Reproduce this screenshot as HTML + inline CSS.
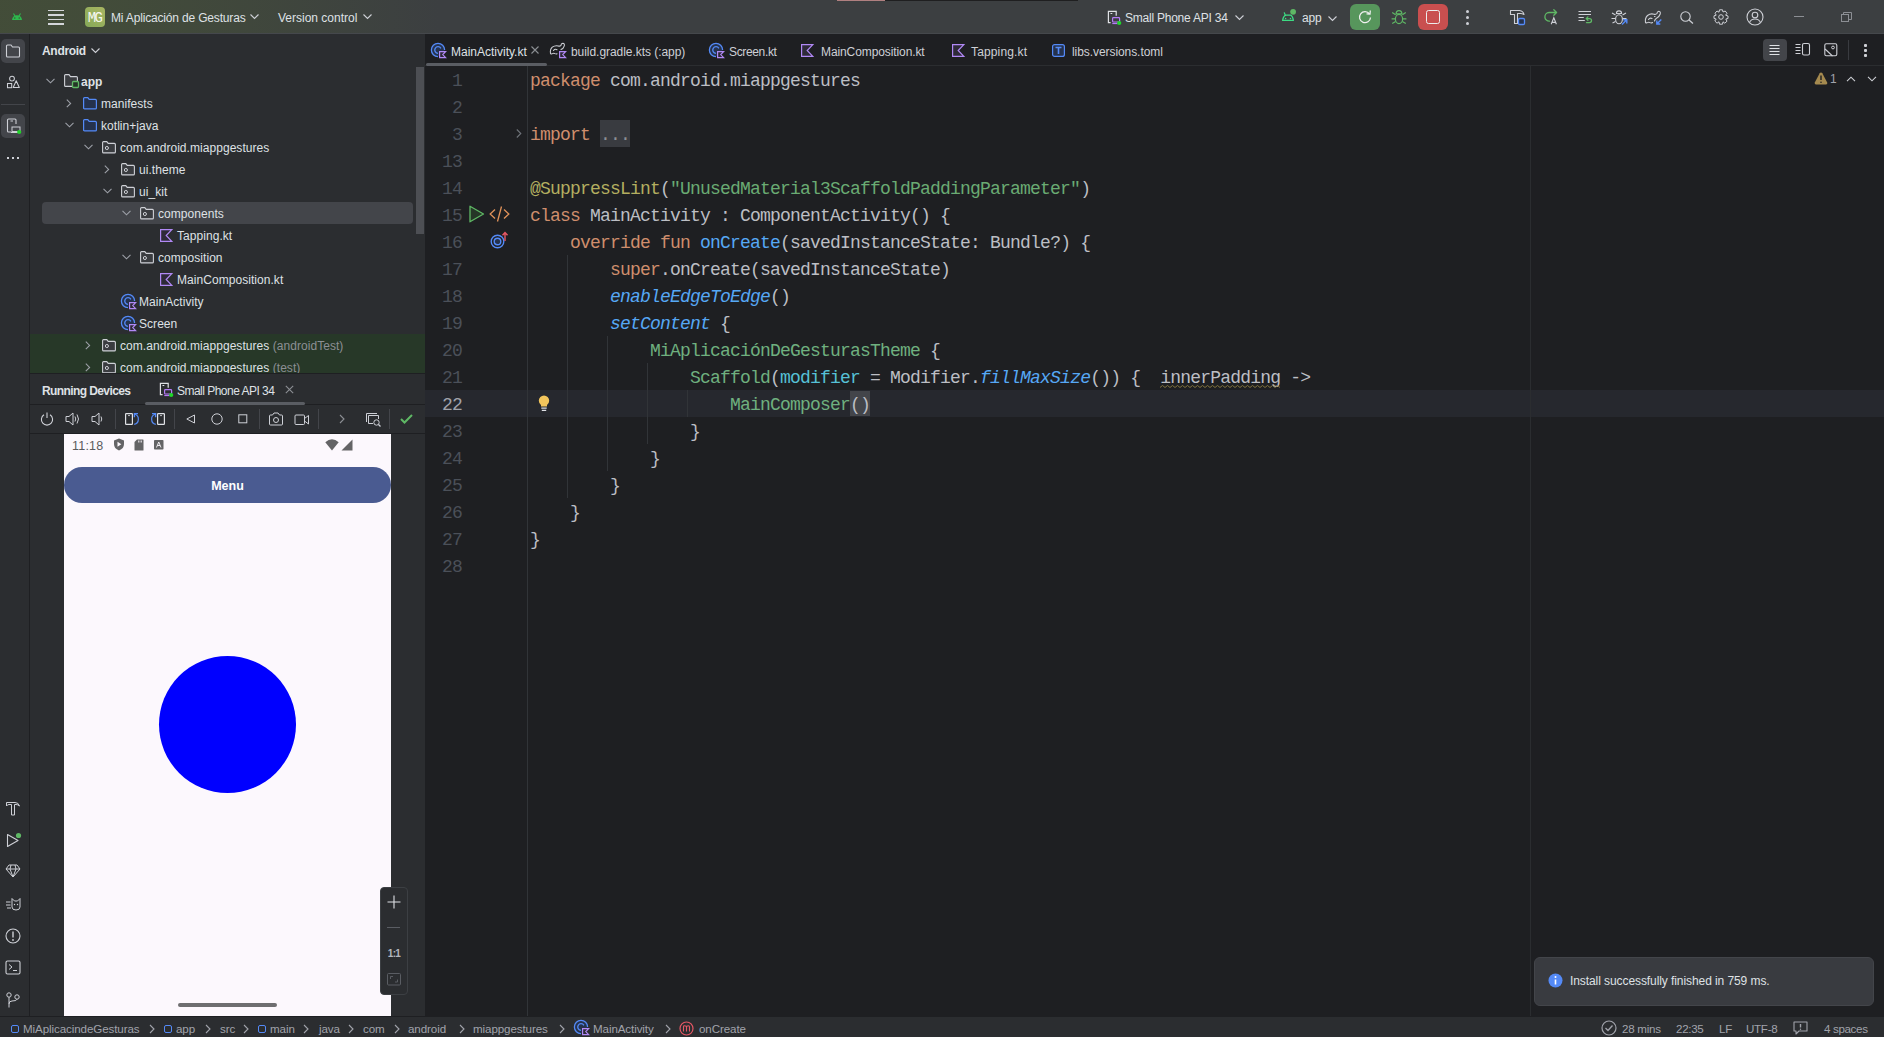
<!DOCTYPE html>
<html><head><meta charset="utf-8">
<style>
*{margin:0;padding:0;box-sizing:border-box}
html,body{width:1884px;height:1037px;overflow:hidden;background:#1E1F22;font-family:"Liberation Sans",sans-serif;color:#DFE1E5}
.a{position:absolute}
svg{position:absolute;overflow:visible}
.t{position:absolute;white-space:pre;font-size:12px;line-height:14px;color:#DFE1E5}
.code{position:absolute;left:530px;font-family:"Liberation Mono",monospace;font-size:18px;letter-spacing:-0.8px;line-height:27px;height:27px;padding-top:2px;white-space:pre;color:#BCBEC4}
.ln{position:absolute;left:402px;width:60px;font-family:"Liberation Mono",monospace;font-size:18px;letter-spacing:-0.8px;line-height:27px;height:27px;padding-top:2px;white-space:pre;color:#4B5059;text-align:right}
.kw{color:#CF8E6D}
.fn{color:#56A8F5}
.it{color:#56A8F5;font-style:italic}
.str{color:#6AAB73}
.ann{color:#B3AE60}
.cmp{color:#6FB07F}
.na{color:#56C1D6}
.ig{position:absolute;width:1px;background:#313438}
</style></head>
<body>
<!-- ================= TITLE BAR ================= -->
<div class="a" style="left:0;top:0;width:1884px;height:34px;background:#3C3F41"></div>
<div class="a" style="left:0;top:0;width:440px;height:33px;background:linear-gradient(90deg,rgba(72,88,50,0.55) 0%,rgba(72,88,50,0.5) 25%,rgba(72,88,50,0.3) 60%,rgba(72,88,50,0) 100%)"></div>
<div class="a" style="left:837px;top:0;width:241px;height:1px;background:#1F1F20"></div>
<div class="a" style="left:837px;top:0;width:48px;height:1px;background:#B08080"></div>
<div class="a" style="left:0;top:33px;width:1884px;height:1px;background:#45484C"></div>
<!-- android head -->
<svg style="left:11px;top:13px" width="12" height="8" viewBox="0 0 12 8"><path d="M1 7 Q1.5 2.5 6 2.3 Q10.5 2.5 11 7 Z" fill="#2DB84D"/><path d="M2.5 0.5 L4 3 M9.5 0.5 L8 3" stroke="#2DB84D" stroke-width="1.1"/><rect x="3.3" y="4.3" width="1" height="1.5" fill="#3F4A38"/><rect x="7.7" y="4.3" width="1" height="1.5" fill="#3F4A38"/></svg>
<!-- hamburger -->
<div class="a" style="left:48px;top:9.5px;width:16px;height:1.5px;background:#D4D6DA"></div>
<div class="a" style="left:48px;top:14px;width:16px;height:1.5px;background:#D4D6DA"></div>
<div class="a" style="left:48px;top:18.5px;width:16px;height:1.5px;background:#D4D6DA"></div>
<div class="a" style="left:48px;top:23px;width:16px;height:1.5px;background:#D4D6DA"></div>
<!-- MG badge -->
<div class="a" style="left:85px;top:7px;width:20px;height:20px;border-radius:4px;background:linear-gradient(45deg,#86AA58,#A9B562)"></div>
<div class="a" style="left:85px;top:8px;width:20px;height:20px;line-height:20px;text-align:center;font-family:'Liberation Mono',monospace;font-size:14px;letter-spacing:-1.6px;text-indent:-1px;color:#F6F8F0;white-space:pre">MG</div>
<div class="t" style="left:111px;top:11px;font-size:12px;letter-spacing:-0.17px">Mi Aplicación de Gesturas</div>
<svg style="left:250px;top:14px" width="9" height="6" viewBox="0 0 9 6"><path d="M0.5 0.5 L4.5 4.5 L8.5 0.5" fill="none" stroke="#CED0D6" stroke-width="1.1"/></svg>
<div class="t" style="left:278px;top:11px;font-size:12px;letter-spacing:0px">Version control</div>
<svg style="left:363px;top:14px" width="9" height="6" viewBox="0 0 9 6"><path d="M0.5 0.5 L4.5 4.5 L8.5 0.5" fill="none" stroke="#CED0D6" stroke-width="1.1"/></svg>
<!-- title right -->
<svg style="left:1107px;top:10px" width="16" height="16" viewBox="0 0 16 16"><path d="M3.6 12.6 H1.4 V1.4 H9.2 V5.8" fill="none" stroke="#DFE1E5" stroke-width="1.2"/><path d="M3.5 3.5 H5.3" stroke="#DFE1E5" stroke-width="1"/><rect x="5.6" y="7.6" width="7" height="4.4" rx="0.8" fill="none" stroke="#B57BF7" stroke-width="1.2"/><path d="M5.3 13.5 H10.5" stroke="#B57BF7" stroke-width="1.2"/><circle cx="12.2" cy="13" r="2.1" fill="#1FD82B"/></svg>
<div class="t" style="left:1125px;top:11px;letter-spacing:-0.23px">Small Phone API 34</div>
<svg style="left:1235px;top:15px" width="9" height="6" viewBox="0 0 9 6"><path d="M0.5 0.5 L4.5 4.5 L8.5 0.5" fill="none" stroke="#CED0D6" stroke-width="1.1"/></svg>
<svg style="left:1280px;top:8px" width="17" height="15" viewBox="0 0 17 15"><path d="M2.6 12.4 Q3.4 8 5.8 7.2 H10.6 Q12.6 8 13.4 12.4 Z" fill="none" stroke="#3DDC84" stroke-width="1.3" stroke-linejoin="round"/><path d="M4.3 4.8 L5.3 7.3" stroke="#3DDC84" stroke-width="1.2" stroke-linecap="round"/><circle cx="5.6" cy="10.5" r="0.75" fill="#3DDC84"/><circle cx="10.5" cy="10.5" r="0.75" fill="#3DDC84"/><circle cx="13.1" cy="3.8" r="2.9" fill="#5FB865"/></svg>
<div class="t" style="left:1302px;top:11px;letter-spacing:-0.2px">app</div>
<svg style="left:1328px;top:16px" width="9" height="6" viewBox="0 0 9 6"><path d="M0.5 0.5 L4.5 4.5 L8.5 0.5" fill="none" stroke="#CED0D6" stroke-width="1.1"/></svg>
<div class="a" style="left:1350px;top:4px;width:30px;height:26px;border-radius:6px;background:#57965C"></div>
<svg style="left:1357px;top:9px" width="16" height="16" viewBox="0 0 16 16"><path d="M12.5 5 A5.5 5.5 0 1 0 13.5 8.5" fill="none" stroke="#F0F0F0" stroke-width="1.3"/><path d="M9.5 4.8 L13 5 L13.3 1.5" fill="none" stroke="#F0F0F0" stroke-width="1.3"/></svg>
<svg style="left:1391px;top:9px" width="16" height="16" viewBox="0 0 16 16"><ellipse cx="8" cy="10" rx="3.6" ry="4.6" fill="none" stroke="#5FB865" stroke-width="1.2"/><path d="M5.1 4.9 A2.9 3.3 0 0 1 10.9 4.9 Z" fill="none" stroke="#5FB865" stroke-width="1.2"/><path d="M1.2 3.6 L4.6 5.8 M14.8 3.6 L11.4 5.8 M0.6 9.8 H4.4 M15.4 9.8 H11.6 M1.2 14.6 L4.6 12.6 M14.8 14.6 L11.4 12.6" stroke="#5FB865" stroke-width="1.2"/></svg>
<div class="a" style="left:1418px;top:4px;width:30px;height:26px;border-radius:6px;background:#C94F4F"></div>
<div class="a" style="left:1426px;top:10px;width:14px;height:14px;border:1.6px solid #EDEDED;border-radius:2.5px"></div>
<div class="a" style="left:1466px;top:10px;width:3px;height:3px;border-radius:2px;background:#CED0D6"></div>
<div class="a" style="left:1466px;top:16px;width:3px;height:3px;border-radius:2px;background:#CED0D6"></div>
<div class="a" style="left:1466px;top:22px;width:3px;height:3px;border-radius:2px;background:#CED0D6"></div>
<!-- hammer -->
<svg style="left:1509px;top:9px" width="17" height="17" viewBox="0 0 17 17"><path d="M1.5 1.5 H10.5 Q14.3 2 15 5.5 Q13.2 4.6 11.5 4.5 H8.5 V14.5 H5.5 V5.5 H1.5 Z" fill="none" stroke="#CED0D6" stroke-width="1.1" stroke-linejoin="round"/><rect x="9.5" y="9.5" width="6" height="6" rx="1.2" fill="#25324D" stroke="#548AF7" stroke-width="1.3"/></svg>
<!-- apply changes -->
<svg style="left:1543px;top:9px" width="17" height="17" viewBox="0 0 17 17"><path d="M6.5 12.2 A4.35 4.35 0 0 1 6 3.5 H13.6 M10.8 0.8 L13.6 3.5 L10.8 6.2" fill="none" stroke="#5FB865" stroke-width="1.3" stroke-linecap="round" stroke-linejoin="round"/><path d="M8.2 15.2 L10.8 8.8 L13.4 15.2 M9 13.4 H12.6" fill="none" stroke="#CED0D6" stroke-width="1.1"/></svg>
<!-- list -->
<svg style="left:1577px;top:10px" width="17" height="16" viewBox="0 0 17 16"><path d="M1.5 1.5 H14 M1.5 4.5 H14 M1.5 7.5 H6.8 M1.5 10.5 H7.8" stroke="#CED0D6" stroke-width="1.1"/><path d="M9.2 8.6 H12.5 A2 2 0 0 1 12.5 12.6 H9.5 M10.9 6.9 L9.2 8.6 L10.9 10.3" fill="none" stroke="#5FB865" stroke-width="1.3" stroke-linecap="round" stroke-linejoin="round"/></svg>
<!-- bug blue arrow -->
<svg style="left:1610px;top:9px" width="19" height="17" viewBox="0 0 19 17"><ellipse cx="9" cy="10.2" rx="3.4" ry="4.5" fill="none" stroke="#CED0D6" stroke-width="1.1"/><path d="M6.4 4.5 A2.6 2.6 0 0 1 11.6 4.5 Z" fill="none" stroke="#CED0D6" stroke-width="1.1"/><path d="M2 4 L5.5 6 M1.5 9.5 H5.5 M2.5 14 L5.5 12.5 M16 4 L12.5 6 M16.5 9.5 H12.5" stroke="#CED0D6" stroke-width="1.1"/><path d="M12 15.5 L16.8 10.8 M13.2 10.8 H16.8 V14.4" fill="none" stroke="#548AF7" stroke-width="1.4"/></svg>
<!-- attach -->
<svg style="left:1644px;top:9px" width="19" height="17" viewBox="0 0 19 17"><path d="M1.5 13.5 Q0.8 9 3.5 6.5 Q6.5 4.2 10 5.2 Q11.8 5.8 13 4.5 Q13 2.5 14.8 2.2 Q16.8 2.5 16.2 5 Q15.2 8 12.5 9.2 Q11 10 10.5 12 M1.5 13.5 Q2.5 14.3 3.5 13.6 Q4.8 12.8 6 13.6 Q7.2 14.4 8.5 13.5 M4.5 10.5 Q6 8.3 8 9.5 M10.5 7.5 H11" fill="none" stroke="#CED0D6" stroke-width="1.1" stroke-linecap="round"/><path d="M17.3 10.5 L12.8 15 M12.8 11.5 V15 H16.3" fill="none" stroke="#548AF7" stroke-width="1.4"/></svg>
<!-- search -->
<svg style="left:1680px;top:11px" width="14" height="13" viewBox="0 0 14 13"><circle cx="5.5" cy="5.5" r="4.7" fill="none" stroke="#CED0D6" stroke-width="1.1"/><line x1="9" y1="9" x2="13" y2="12.5" stroke="#CED0D6" stroke-width="1.2"/></svg>
<!-- gear -->
<svg style="left:1713px;top:9px" width="16" height="16" viewBox="0 0 16 16"><path d="M6.5 0.8 H9.5 L10 3 L12.2 2 L14 4.3 L12.6 6.2 L15 7 V9.5 L12.8 10 L14 12.2 L11.8 14.2 L10 12.8 L9.5 15.2 H6.5 L6 12.8 L4 14.2 L1.8 12 L3.2 10 L1 9.5 V6.8 L3.2 6.2 L2 4.2 L4 2 L6 3.2 Z" fill="none" stroke="#CED0D6" stroke-width="1" stroke-linejoin="round"/><circle cx="8" cy="8" r="2.3" fill="none" stroke="#CED0D6"/></svg>
<!-- user -->
<svg style="left:1746px;top:8px" width="18" height="18" viewBox="0 0 18 18"><circle cx="9" cy="9" r="8" fill="none" stroke="#CED0D6" stroke-width="1.1"/><circle cx="9" cy="7" r="2.8" fill="none" stroke="#CED0D6" stroke-width="1.1"/><path d="M3.5 14.5 Q5 11 9 11 Q13 11 14.5 14.5" fill="none" stroke="#CED0D6" stroke-width="1.1"/></svg>
<div class="a" style="left:1794px;top:16px;width:10px;height:1px;background:#8C8F94"></div>
<svg style="left:1841px;top:12px" width="11" height="10" viewBox="0 0 11 10"><rect x="0.5" y="2.5" width="7" height="7" fill="none" stroke="#8C8F94"/><path d="M2.5 2.5 V0.5 H10.5 V7.5 H7.5" fill="none" stroke="#8C8F94"/></svg>
<!-- ================= LEFT STRIP ================= -->
<div class="a" style="left:0;top:34px;width:29px;height:982px;background:#2B2D30"></div>
<div class="a" style="left:29px;top:34px;width:1px;height:982px;background:#1E1F22"></div>
<div class="a" style="left:1px;top:39px;width:24px;height:24px;border-radius:5px;background:#43454A"></div>
<svg style="left:5px;top:44px" width="16" height="14" viewBox="0 0 16 14"><path d="M1.5 2 Q1.5 1 2.5 1 H6 L7.5 3 H13.5 Q14.5 3 14.5 4 V12 Q14.5 13 13.5 13 H2.5 Q1.5 13 1.5 12 Z" fill="none" stroke="#CED0D6" stroke-width="1.1"/></svg>
<svg style="left:6px;top:75px" width="15" height="14" viewBox="0 0 15 14"><circle cx="6" cy="3.6" r="2.4" fill="none" stroke="#CED0D6" stroke-width="1.05"/><rect x="1.5" y="8.5" width="4.2" height="4.2" fill="none" stroke="#CED0D6" stroke-width="1.05"/><path d="M10.2 5.8 L13.3 12.5 H7.2 Z" fill="none" stroke="#CED0D6" stroke-width="1.05" stroke-linejoin="round"/></svg>
<div class="a" style="left:1px;top:104px;width:24px;height:1px;background:#43454A"></div>
<div class="a" style="left:1px;top:114px;width:24px;height:24px;border-radius:5px;background:#43454A"></div>
<svg style="left:6px;top:118px" width="16" height="16" viewBox="0 0 16 16"><path d="M10 6 V2 Q10 1 9 1 H2.5 Q1.5 1 1.5 2 V13 Q1.5 14 2.5 14 H5" fill="none" stroke="#CED0D6" stroke-width="1.1"/><line x1="4.5" y1="3" x2="7" y2="3" stroke="#CED0D6"/><rect x="6" y="9" width="8" height="4.5" fill="none" stroke="#CED0D6"/><line x1="5" y1="14.5" x2="12" y2="14.5" stroke="#CED0D6"/><circle cx="13.2" cy="14" r="2.1" fill="#22D32B"/></svg>
<div class="a" style="left:7px;top:157px;width:2px;height:2px;background:#CED0D6"></div>
<div class="a" style="left:12px;top:157px;width:2px;height:2px;background:#CED0D6"></div>
<div class="a" style="left:17px;top:157px;width:2px;height:2px;background:#CED0D6"></div>
<!-- bottom strip icons -->
<svg style="left:6px;top:801px" width="15" height="15" viewBox="0 0 15 15"><path d="M0.5 1.5 H9 Q12.5 1.5 13.5 5 Q12 3.5 10 3.5 H8.5 V14 H5.5 V3.5 H3 Q1.5 3.5 0.5 5 Z" fill="none" stroke="#CED0D6" stroke-linejoin="round"/></svg>
<svg style="left:6px;top:832px" width="16" height="16" viewBox="0 0 16 16"><path d="M1.5 2.5 L12 8.5 L1.5 14.5 Z" fill="none" stroke="#CED0D6" stroke-width="1.1" stroke-linejoin="round"/><circle cx="12.5" cy="3.5" r="2.6" fill="#5FB865"/></svg>
<svg style="left:5px;top:864px" width="16" height="14" viewBox="0 0 16 14"><path d="M4 1 H12 L15 5 L8 13 L1 5 Z M1 5 H15 M6 1 L5 5 L8 13 L11 5 L10 1" fill="none" stroke="#CED0D6" stroke-linejoin="round"/></svg>
<svg style="left:5px;top:897px" width="16" height="14" viewBox="0 0 16 14"><path d="M7 1.5 L9.5 4 H12.5 L15 1.5 V10 Q15 13 11 13 Q7 13 7 10 Z" fill="none" stroke="#CED0D6" stroke-linejoin="round"/><path d="M1 5 H5.5 M1 8 H5.5 M2 11 H6" stroke="#CED0D6"/><circle cx="9.5" cy="7.5" r="0.7" fill="#CED0D6"/><circle cx="12.5" cy="7.5" r="0.7" fill="#CED0D6"/></svg>
<svg style="left:5px;top:928px" width="16" height="16" viewBox="0 0 16 16"><circle cx="8" cy="8" r="7" fill="none" stroke="#CED0D6" stroke-width="1.1"/><line x1="8" y1="3.5" x2="8" y2="9.5" stroke="#CED0D6" stroke-width="1.4"/><circle cx="8" cy="12" r="0.9" fill="#CED0D6"/></svg>
<svg style="left:5px;top:960px" width="16" height="15" viewBox="0 0 16 15"><rect x="1" y="1" width="14" height="13" rx="1.5" fill="none" stroke="#CED0D6" stroke-width="1.1"/><path d="M4 4.5 L7 7 L4 9.5 M8 10.5 H12" fill="none" stroke="#CED0D6"/></svg>
<svg style="left:6px;top:992px" width="14" height="16" viewBox="0 0 14 16"><circle cx="3" cy="3" r="2.2" fill="none" stroke="#CED0D6"/><circle cx="11" cy="5" r="2.2" fill="none" stroke="#CED0D6"/><path d="M3 5.2 V15.5 M3 12 Q3 9 6 9 Q11 9 11 7.2" fill="none" stroke="#CED0D6"/></svg>
<!-- ================= PROJECT PANEL ================= -->
<div class="a" style="left:30px;top:34px;width:395px;height:339px;background:#2B2D30"></div>
<div class="t" style="left:42px;top:44px;font-weight:bold;letter-spacing:-0.3px">Android</div>
<svg style="left:91px;top:48px" width="9" height="6" viewBox="0 0 9 6"><path d="M0.5 0.5 L4.5 4.5 L8.5 0.5" fill="none" stroke="#CED0D6" stroke-width="1.1"/></svg>
<div class="a" style="left:416px;top:67px;width:8px;height:167px;background:#4D4F54"></div>
<div class="a" style="left:30px;top:334px;width:395px;height:39px;background:#273828"></div>
<div class="a" style="left:42px;top:202px;width:371px;height:22px;border-radius:4px;background:#43454A"></div>
<svg style="left:46px;top:78px" width="9" height="6" viewBox="0 0 9 6"><path d="M0.5 0.8 L4.5 4.8 L8.5 0.8" fill="none" stroke="#9DA0A8" stroke-width="1.1"/></svg>
<svg style="left:64px;top:74px" width="17" height="15" viewBox="0 0 17 15"><path d="M0.6 1.6 Q0.6 0.6 1.6 0.6 H5 L6.5 2.6 H12.4 Q13.4 2.6 13.4 3.6 V11.4 Q13.4 12.4 12.4 12.4 H1.6 Q0.6 12.4 0.6 11.4 Z" fill="#3A3C40" stroke="#CED0D6" stroke-width="1.1"/><rect x="8.5" y="7.5" width="6" height="6" rx="1" fill="#253627" stroke="#5FB865" stroke-width="1.3"/></svg>
<div class="t" style="left:81px;top:75px;font-weight:bold;letter-spacing:0.05px">app</div>
<svg style="left:66px;top:99px" width="6" height="9" viewBox="0 0 6 9"><path d="M0.8 0.6 L4.6 4.4 L0.8 8.2" fill="none" stroke="#9DA0A8" stroke-width="1.1"/></svg>
<svg style="left:83px;top:97px" width="15" height="13" viewBox="0 0 15 13"><path d="M0.6 1.6 Q0.6 0.6 1.6 0.6 H4.8 L6.2 2.4 H12.4 Q13.4 2.4 13.4 3.4 V10.9 Q13.4 11.9 12.4 11.9 H1.6 Q0.6 11.9 0.6 10.9 Z" fill="#25324D" stroke="#548AF7" stroke-width="1.2"/></svg>
<div class="t" style="left:101px;top:97px;letter-spacing:0.05px">manifests</div>
<svg style="left:65px;top:122px" width="9" height="6" viewBox="0 0 9 6"><path d="M0.5 0.8 L4.5 4.8 L8.5 0.8" fill="none" stroke="#9DA0A8" stroke-width="1.1"/></svg>
<svg style="left:83px;top:119px" width="15" height="13" viewBox="0 0 15 13"><path d="M0.6 1.6 Q0.6 0.6 1.6 0.6 H4.8 L6.2 2.4 H12.4 Q13.4 2.4 13.4 3.4 V10.9 Q13.4 11.9 12.4 11.9 H1.6 Q0.6 11.9 0.6 10.9 Z" fill="#25324D" stroke="#548AF7" stroke-width="1.2"/></svg>
<div class="t" style="left:101px;top:119px;letter-spacing:0.05px">kotlin+java</div>
<svg style="left:84px;top:144px" width="9" height="6" viewBox="0 0 9 6"><path d="M0.5 0.8 L4.5 4.8 L8.5 0.8" fill="none" stroke="#9DA0A8" stroke-width="1.1"/></svg>
<svg style="left:102px;top:141px" width="15" height="13" viewBox="0 0 15 13"><path d="M0.6 1.6 Q0.6 0.6 1.6 0.6 H4.8 L6.2 2.4 H12.4 Q13.4 2.4 13.4 3.4 V10.9 Q13.4 11.9 12.4 11.9 H1.6 Q0.6 11.9 0.6 10.9 Z" fill="#3A3C40" stroke="#CED0D6" stroke-width="1.1"/><circle cx="4.9" cy="7" r="1.55" fill="none" stroke="#CED0D6" stroke-width="1"/></svg>
<div class="t" style="left:120px;top:141px;letter-spacing:0.05px">com.android.miappgestures</div>
<svg style="left:104px;top:165px" width="6" height="9" viewBox="0 0 6 9"><path d="M0.8 0.6 L4.6 4.4 L0.8 8.2" fill="none" stroke="#9DA0A8" stroke-width="1.1"/></svg>
<svg style="left:121px;top:163px" width="15" height="13" viewBox="0 0 15 13"><path d="M0.6 1.6 Q0.6 0.6 1.6 0.6 H4.8 L6.2 2.4 H12.4 Q13.4 2.4 13.4 3.4 V10.9 Q13.4 11.9 12.4 11.9 H1.6 Q0.6 11.9 0.6 10.9 Z" fill="#3A3C40" stroke="#CED0D6" stroke-width="1.1"/><circle cx="4.9" cy="7" r="1.55" fill="none" stroke="#CED0D6" stroke-width="1"/></svg>
<div class="t" style="left:139px;top:163px;letter-spacing:0.05px">ui.theme</div>
<svg style="left:103px;top:188px" width="9" height="6" viewBox="0 0 9 6"><path d="M0.5 0.8 L4.5 4.8 L8.5 0.8" fill="none" stroke="#9DA0A8" stroke-width="1.1"/></svg>
<svg style="left:121px;top:185px" width="15" height="13" viewBox="0 0 15 13"><path d="M0.6 1.6 Q0.6 0.6 1.6 0.6 H4.8 L6.2 2.4 H12.4 Q13.4 2.4 13.4 3.4 V10.9 Q13.4 11.9 12.4 11.9 H1.6 Q0.6 11.9 0.6 10.9 Z" fill="#3A3C40" stroke="#CED0D6" stroke-width="1.1"/><circle cx="4.9" cy="7" r="1.55" fill="none" stroke="#CED0D6" stroke-width="1"/></svg>
<div class="t" style="left:139px;top:185px;letter-spacing:0.05px">ui_kit</div>
<svg style="left:122px;top:210px" width="9" height="6" viewBox="0 0 9 6"><path d="M0.5 0.8 L4.5 4.8 L8.5 0.8" fill="none" stroke="#9DA0A8" stroke-width="1.1"/></svg>
<svg style="left:140px;top:207px" width="15" height="13" viewBox="0 0 15 13"><path d="M0.6 1.6 Q0.6 0.6 1.6 0.6 H4.8 L6.2 2.4 H12.4 Q13.4 2.4 13.4 3.4 V10.9 Q13.4 11.9 12.4 11.9 H1.6 Q0.6 11.9 0.6 10.9 Z" fill="#3A3C40" stroke="#CED0D6" stroke-width="1.1"/><circle cx="4.9" cy="7" r="1.55" fill="none" stroke="#CED0D6" stroke-width="1"/></svg>
<div class="t" style="left:158px;top:207px;letter-spacing:0.05px">components</div>
<svg style="left:160px;top:229px" width="13" height="13" viewBox="0 0 13 13"><path d="M0.6 0.6 H11.8 L6.2 6.5 L11.8 12.4 H0.6 Z" fill="#2E2A38" stroke="#B189F5" stroke-width="1.2" stroke-linejoin="miter"/></svg>
<div class="t" style="left:177px;top:229px;letter-spacing:0.05px">Tapping.kt</div>
<svg style="left:122px;top:254px" width="9" height="6" viewBox="0 0 9 6"><path d="M0.5 0.8 L4.5 4.8 L8.5 0.8" fill="none" stroke="#9DA0A8" stroke-width="1.1"/></svg>
<svg style="left:140px;top:251px" width="15" height="13" viewBox="0 0 15 13"><path d="M0.6 1.6 Q0.6 0.6 1.6 0.6 H4.8 L6.2 2.4 H12.4 Q13.4 2.4 13.4 3.4 V10.9 Q13.4 11.9 12.4 11.9 H1.6 Q0.6 11.9 0.6 10.9 Z" fill="#3A3C40" stroke="#CED0D6" stroke-width="1.1"/><circle cx="4.9" cy="7" r="1.55" fill="none" stroke="#CED0D6" stroke-width="1"/></svg>
<div class="t" style="left:158px;top:251px;letter-spacing:0.05px">composition</div>
<svg style="left:160px;top:273px" width="13" height="13" viewBox="0 0 13 13"><path d="M0.6 0.6 H11.8 L6.2 6.5 L11.8 12.4 H0.6 Z" fill="#2E2A38" stroke="#B189F5" stroke-width="1.2" stroke-linejoin="miter"/></svg>
<div class="t" style="left:177px;top:273px;letter-spacing:0.05px">MainComposition.kt</div>
<svg style="left:120px;top:293px" width="17" height="17" viewBox="0 0 17 17"><circle cx="8" cy="8" r="6.6" fill="#25324D"/><path d="M14.6 8 A6.6 6.6 0 1 0 8 14.6" fill="none" stroke="#548AF7" stroke-width="1.3"/><path d="M10.9 6.35 A3.3 3.3 0 1 0 8 11.3" fill="none" stroke="#548AF7" stroke-width="1.3"/><path d="M9.6 9.6 H15.6 L12.8 12.6 L15.6 15.6 H9.6 Z" fill="#2E2A38" stroke="#B189F5" stroke-width="1.2"/></svg>
<div class="t" style="left:139px;top:295px;letter-spacing:0.05px">MainActivity</div>
<svg style="left:120px;top:315px" width="17" height="17" viewBox="0 0 17 17"><circle cx="8" cy="8" r="6.6" fill="#25324D"/><path d="M14.6 8 A6.6 6.6 0 1 0 8 14.6" fill="none" stroke="#548AF7" stroke-width="1.3"/><path d="M10.9 6.35 A3.3 3.3 0 1 0 8 11.3" fill="none" stroke="#548AF7" stroke-width="1.3"/><path d="M9.6 9.6 H15.6 L12.8 12.6 L15.6 15.6 H9.6 Z" fill="#2E2A38" stroke="#B189F5" stroke-width="1.2"/></svg>
<div class="t" style="left:139px;top:317px;letter-spacing:0.05px">Screen</div>
<svg style="left:85px;top:341px" width="6" height="9" viewBox="0 0 6 9"><path d="M0.8 0.6 L4.6 4.4 L0.8 8.2" fill="none" stroke="#9DA0A8" stroke-width="1.1"/></svg>
<svg style="left:102px;top:339px" width="15" height="13" viewBox="0 0 15 13"><path d="M0.6 1.6 Q0.6 0.6 1.6 0.6 H4.8 L6.2 2.4 H12.4 Q13.4 2.4 13.4 3.4 V10.9 Q13.4 11.9 12.4 11.9 H1.6 Q0.6 11.9 0.6 10.9 Z" fill="#3A3C40" stroke="#CED0D6" stroke-width="1.1"/><circle cx="4.9" cy="7" r="1.55" fill="none" stroke="#CED0D6" stroke-width="1"/></svg>
<div class="t" style="left:120px;top:339px;letter-spacing:0.05px">com.android.miappgestures<span style="color:#8C8F94"> (androidTest)</span></div>
<svg style="left:85px;top:363px" width="6" height="9" viewBox="0 0 6 9"><path d="M0.8 0.6 L4.6 4.4 L0.8 8.2" fill="none" stroke="#9DA0A8" stroke-width="1.1"/></svg>
<svg style="left:102px;top:361px" width="15" height="13" viewBox="0 0 15 13"><path d="M0.6 1.6 Q0.6 0.6 1.6 0.6 H4.8 L6.2 2.4 H12.4 Q13.4 2.4 13.4 3.4 V10.9 Q13.4 11.9 12.4 11.9 H1.6 Q0.6 11.9 0.6 10.9 Z" fill="#3A3C40" stroke="#CED0D6" stroke-width="1.1"/><circle cx="4.9" cy="7" r="1.55" fill="none" stroke="#CED0D6" stroke-width="1"/></svg>
<div class="t" style="left:120px;top:361px;letter-spacing:0.05px">com.android.miappgestures<span style="color:#8C8F94"> (test)</span></div>
<!-- ================= RUNNING DEVICES ================= -->
<div class="a" style="left:30px;top:373px;width:395px;height:1px;background:#1E1F22"></div>
<div class="a" style="left:30px;top:374px;width:395px;height:642px;background:#2B2D30"></div>
<div class="t" style="left:42px;top:384px;font-weight:bold;letter-spacing:-0.6px">Running Devices</div>
<svg style="left:159px;top:382px" width="16" height="16" viewBox="0 0 16 16"><path d="M3.6 12.6 H1.4 V1.4 H9.2 V5.8" fill="none" stroke="#DFE1E5" stroke-width="1.2"/><path d="M3.5 3.5 H5.3" stroke="#DFE1E5" stroke-width="1"/><rect x="5.6" y="7.6" width="7" height="4.4" rx="0.8" fill="none" stroke="#B57BF7" stroke-width="1.2"/><path d="M5.3 13.5 H10.5" stroke="#B57BF7" stroke-width="1.2"/><circle cx="12.2" cy="13" r="2.1" fill="#1FD82B"/></svg>
<div class="t" style="left:177px;top:384px;letter-spacing:-0.52px">Small Phone API 34</div>
<svg style="left:285px;top:385px" width="9" height="9" viewBox="0 0 9 9"><path d="M0.8 0.8 L8.2 8.2 M8.2 0.8 L0.8 8.2" stroke="#8C8F94" stroke-width="1.1"/></svg>
<div class="a" style="left:30px;top:404px;width:395px;height:1px;background:#1E1F22"></div>
<div class="a" style="left:145px;top:402px;width:160px;height:3px;border-radius:2px;background:#5A5D63"></div>
<!-- toolbar -->
<svg style="left:40px;top:412px" width="14" height="14" viewBox="0 0 14 14"><path d="M4 2.8 A5.6 5.6 0 1 0 10 2.8" fill="none" stroke="#CED0D6" stroke-width="1.1"/><line x1="7" y1="0.5" x2="7" y2="6" stroke="#CED0D6" stroke-width="1.1"/></svg>
<svg style="left:65px;top:412px" width="15" height="14" viewBox="0 0 15 14"><path d="M1 4.5 H4 L8 1 V13 L4 9.5 H1 Z" fill="none" stroke="#CED0D6" stroke-linejoin="round"/><path d="M10 4.5 Q11.5 7 10 9.5 M12 2.5 Q15 7 12 11.5" fill="none" stroke="#CED0D6"/></svg>
<svg style="left:91px;top:412px" width="12" height="14" viewBox="0 0 12 14"><path d="M1 4.5 H4 L8 1 V13 L4 9.5 H1 Z" fill="none" stroke="#CED0D6" stroke-linejoin="round"/><path d="M10 4.5 Q11.5 7 10 9.5" fill="none" stroke="#CED0D6"/></svg>
<div class="a" style="left:115px;top:409px;width:1px;height:20px;background:#43454A"></div>
<svg style="left:124px;top:412px" width="17" height="14" viewBox="0 0 17 14"><rect x="1.6" y="1.6" width="6.8" height="10.8" rx="0.6" fill="none" stroke="#DFE1E5" stroke-width="1.2"/><path d="M4.2 3.6 H5.8" stroke="#DFE1E5" stroke-width="1"/><path d="M10.2 12.4 A5.4 5.4 0 0 0 10.6 2" fill="none" stroke="#548AF7" stroke-width="1.2"/><path d="M10.4 5.2 V1.6 H14" fill="none" stroke="#548AF7" stroke-width="1.4"/></svg>
<svg style="left:150px;top:412px" width="17" height="14" viewBox="0 0 17 14"><rect x="7.6" y="1.6" width="6.8" height="10.8" rx="0.6" fill="none" stroke="#DFE1E5" stroke-width="1.2"/><path d="M10.2 3.6 H11.8" stroke="#DFE1E5" stroke-width="1"/><path d="M5.8 12.4 A5.4 5.4 0 0 1 5.4 2" fill="none" stroke="#548AF7" stroke-width="1.2"/><path d="M5.6 5.2 V1.6 H2" fill="none" stroke="#548AF7" stroke-width="1.4"/></svg>
<div class="a" style="left:174px;top:409px;width:1px;height:20px;background:#43454A"></div>
<svg style="left:186px;top:414px" width="10" height="10" viewBox="0 0 10 10"><path d="M0.8 5 L8.5 1 V9 Z" fill="none" stroke="#CED0D6" stroke-linejoin="round"/></svg>
<svg style="left:211px;top:413px" width="12" height="12" viewBox="0 0 12 12"><circle cx="6" cy="6" r="5.2" fill="none" stroke="#CED0D6"/></svg>
<svg style="left:238px;top:414px" width="10" height="10" viewBox="0 0 10 10"><rect x="0.8" y="0.8" width="8" height="8" fill="none" stroke="#CED0D6"/></svg>
<div class="a" style="left:259px;top:409px;width:1px;height:20px;background:#43454A"></div>
<svg style="left:268px;top:412px" width="16" height="14" viewBox="0 0 16 14"><path d="M1.5 4 Q1.5 3 2.5 3 H4.5 L6 1 H10 L11.5 3 H13.5 Q14.5 3 14.5 4 V12 Q14.5 13 13.5 13 H2.5 Q1.5 13 1.5 12 Z" fill="none" stroke="#CED0D6" stroke-linejoin="round"/><circle cx="8" cy="8" r="2.5" fill="none" stroke="#CED0D6"/></svg>
<svg style="left:294px;top:414px" width="16" height="12" viewBox="0 0 16 12"><rect x="1" y="1" width="9.5" height="9.5" rx="1" fill="none" stroke="#CED0D6"/><path d="M10.5 4.5 L14.5 1.5 V10 L10.5 7" fill="none" stroke="#CED0D6" stroke-linejoin="round"/></svg>
<div class="a" style="left:318px;top:409px;width:1px;height:20px;background:#43454A"></div>
<svg style="left:339px;top:414px" width="7" height="10" viewBox="0 0 7 10"><path d="M1 1 L5 5 L1 9" fill="none" stroke="#8C8F94" stroke-width="1.1"/></svg>
<svg style="left:365px;top:412px" width="17" height="16" viewBox="0 0 17 16"><path d="M1.5 10 V1.5 H12 M3.5 11.5 V3.5 H13.5 V7" fill="none" stroke="#CED0D6"/><path d="M3.5 11.5 H8" fill="none" stroke="#CED0D6"/><circle cx="11.5" cy="10.5" r="2.7" fill="none" stroke="#CED0D6"/><line x1="13.5" y1="12.5" x2="15.5" y2="14.5" stroke="#CED0D6" stroke-width="1.2"/></svg>
<div class="a" style="left:389px;top:409px;width:1px;height:20px;background:#43454A"></div>
<svg style="left:400px;top:414px" width="13" height="10" viewBox="0 0 13 10"><path d="M1 5 L4.5 8.5 L12 1" fill="none" stroke="#5FB865" stroke-width="2"/></svg>
<div class="a" style="left:30px;top:433px;width:395px;height:1px;background:#1E1F22"></div>
<!-- phone -->
<div class="a" style="left:64px;top:434px;width:327px;height:582px;background:#FCF8FD;overflow:hidden">
  <div class="t" style="left:8px;top:5px;font-size:12.5px;line-height:14px;color:#5B5B5E;letter-spacing:0.2px">11:18</div>
  <svg style="left:49px;top:4px" width="12" height="13" viewBox="0 0 12 13"><path d="M6 0.5 L11 2.5 V6 Q11 10.5 6 12.5 Q1 10.5 1 6 V2.5 Z" fill="#646466"/><path d="M4.5 3.8 L8.3 6.3 L4.5 8.8 Z" fill="#FCF8FD"/></svg>
  <svg style="left:70px;top:5px" width="10" height="12" viewBox="0 0 10 12"><path d="M3 0.5 H9 Q9.5 0.5 9.5 1 V11 Q9.5 11.5 9 11.5 H1 Q0.5 11.5 0.5 11 V3 Z" fill="#646466"/><path d="M4.5 1.5 V3.5 M6 1.5 V3.5 M7.5 1.5 V3.5" stroke="#FCF8FD" stroke-width="0.7"/></svg>
  <svg style="left:90px;top:6px" width="10" height="10" viewBox="0 0 10 10"><rect x="0" y="0" width="9.5" height="9.5" rx="0.8" fill="#646466"/><path d="M2.5 7.5 L4.75 2 L7 7.5 M3.5 5.5 H6" fill="none" stroke="#FCF8FD" stroke-width="0.9"/></svg>
  <svg style="left:261px;top:5px" width="14" height="12" viewBox="0 0 14 12"><path d="M7 11.5 L0.3 3.2 Q7 -2.5 13.7 3.2 Z" fill="#646466"/></svg>
  <svg style="left:277px;top:5px" width="12" height="12" viewBox="0 0 12 12"><path d="M11.5 0.5 V11.5 H0.5 Z" fill="#646466"/></svg>
  <div class="a" style="left:0;top:33px;width:327px;height:36px;border-radius:18px;background:#4A5B91"></div>
  <div class="t" style="left:0;top:45px;width:327px;text-align:center;font-size:12.5px;font-weight:bold;color:#FFFFFF">Menu</div>
  <div class="a" style="left:95px;top:222px;width:137px;height:137px;border-radius:50%;background:#0000FF"></div>
  <div class="a" style="left:114px;top:569px;width:99px;height:4px;border-radius:2px;background:#6E6E70"></div>
</div>
<!-- zoom controls -->
<div class="a" style="left:380px;top:887px;width:28px;height:108px;border-radius:4px;background:#2B2D30;border:1px solid #3C3F43"></div>
<svg style="left:387px;top:895px" width="14" height="14" viewBox="0 0 14 14"><path d="M7 0.5 V13.5 M0.5 7 H13.5" stroke="#DFE1E5" stroke-width="1.1"/></svg>
<div class="a" style="left:387px;top:927px;width:13px;height:1px;background:#5A5D63"></div>
<div class="t" style="left:380px;top:948px;width:28px;text-align:center;font-size:10px;line-height:12px;font-weight:bold;color:#B4B8BF;letter-spacing:-0.6px">1:1</div>
<svg style="left:387px;top:973px" width="14" height="14" viewBox="0 0 14 14"><rect x="0.5" y="0.5" width="13" height="11.5" rx="1" fill="none" stroke="#5A5D63"/><path d="M3.5 6 V3.5 H6 M10.5 6.5 V9 H8" fill="none" stroke="#5A5D63"/></svg>
<!-- ================= EDITOR ================= -->
<div class="a" style="left:425px;top:34px;width:1459px;height:982px;background:#1E1F22"></div>
<div class="a" style="left:425px;top:65px;width:1459px;height:1px;background:#2B2D30"></div>
<div class="a" style="left:426px;top:63px;width:121px;height:3px;border-radius:2px;background:#5A5D63"></div>
<div class="a" style="left:425px;top:390px;width:1459px;height:27px;background:#26282E"></div>
<div class="a" style="left:527px;top:66px;width:1px;height:950px;background:#313438"></div>
<div class="a" style="left:1530px;top:66px;width:1px;height:950px;background:#2B2D30"></div>
<div class="ig" style="left:567px;top:255px;height:243px"></div>
<div class="ig" style="left:607px;top:336px;height:135px"></div>
<div class="ig" style="left:647px;top:363px;height:81px"></div>
<div class="ig" style="left:687px;top:390px;height:27px"></div>
<div class="a" style="left:850px;top:391px;width:20px;height:25px;background:#43454A"></div>
<div class="a" style="left:600px;top:120px;width:30px;height:27px;background:#393B40"></div>
<div class="ln" style="top:66px;color:#4B5059">1</div>
<div class="code" style="top:66px"><span class="kw">package</span> com.android.miappgestures</div>
<div class="ln" style="top:93px;color:#4B5059">2</div>
<div class="ln" style="top:120px;color:#4B5059">3</div>
<div class="code" style="top:120px"><span class="kw">import</span> <span style="color:#8C8F94">...</span></div>
<div class="ln" style="top:147px;color:#4B5059">13</div>
<div class="ln" style="top:174px;color:#4B5059">14</div>
<div class="code" style="top:174px"><span class="ann">@SuppressLint</span>(<span class="str">"UnusedMaterial3ScaffoldPaddingParameter"</span>)</div>
<div class="ln" style="top:201px;color:#4B5059">15</div>
<div class="code" style="top:201px"><span class="kw">class</span> MainActivity : ComponentActivity() {</div>
<div class="ln" style="top:228px;color:#4B5059">16</div>
<div class="code" style="top:228px">    <span class="kw">override fun</span> <span class="fn">onCreate</span>(savedInstanceState: Bundle?) {</div>
<div class="ln" style="top:255px;color:#4B5059">17</div>
<div class="code" style="top:255px">        <span class="kw">super</span>.onCreate(savedInstanceState)</div>
<div class="ln" style="top:282px;color:#4B5059">18</div>
<div class="code" style="top:282px">        <span class="it">enableEdgeToEdge</span>()</div>
<div class="ln" style="top:309px;color:#4B5059">19</div>
<div class="code" style="top:309px">        <span class="it">setContent</span> {</div>
<div class="ln" style="top:336px;color:#4B5059">20</div>
<div class="code" style="top:336px">            <span class="cmp">MiAplicaciónDeGesturasTheme</span> {</div>
<div class="ln" style="top:363px;color:#4B5059">21</div>
<div class="code" style="top:363px">                <span class="cmp">Scaffold</span>(<span class="na">modifier</span> = Modifier.<span class="it">fillMaxSize</span>()) {  innerPadding -&gt;</div>
<div class="ln" style="top:390px;color:#A1A3AB">22</div>
<div class="code" style="top:390px">                    <span class="cmp">MainComposer</span>()</div>
<div class="ln" style="top:417px;color:#4B5059">23</div>
<div class="code" style="top:417px">                }</div>
<div class="ln" style="top:444px;color:#4B5059">24</div>
<div class="code" style="top:444px">            }</div>
<div class="ln" style="top:471px;color:#4B5059">25</div>
<div class="code" style="top:471px">        }</div>
<div class="ln" style="top:498px;color:#4B5059">26</div>
<div class="code" style="top:498px">    }</div>
<div class="ln" style="top:525px;color:#4B5059">27</div>
<div class="code" style="top:525px">}</div>
<div class="ln" style="top:552px;color:#4B5059">28</div>
<svg style="left:0;top:0" width="1884" height="1037"><polyline points="1160.0,387.5 1162.5,385.5 1165.0,387.5 1167.5,385.5 1170.0,387.5 1172.5,385.5 1175.0,387.5 1177.5,385.5 1180.0,387.5 1182.5,385.5 1185.0,387.5 1187.5,385.5 1190.0,387.5 1192.5,385.5 1195.0,387.5 1197.5,385.5 1200.0,387.5 1202.5,385.5 1205.0,387.5 1207.5,385.5 1210.0,387.5 1212.5,385.5 1215.0,387.5 1217.5,385.5 1220.0,387.5 1222.5,385.5 1225.0,387.5 1227.5,385.5 1230.0,387.5 1232.5,385.5 1235.0,387.5 1237.5,385.5 1240.0,387.5 1242.5,385.5 1245.0,387.5 1247.5,385.5 1250.0,387.5 1252.5,385.5 1255.0,387.5 1257.5,385.5 1260.0,387.5 1262.5,385.5 1265.0,387.5 1267.5,385.5 1270.0,387.5 1272.5,385.5 1275.0,387.5 1277.5,385.5 1280.0,387.5" fill="none" stroke="#8A7A3E" stroke-width="0.9"/></svg>
<svg style="left:516px;top:129px" width="6" height="9" viewBox="0 0 6 9"><path d="M0.8 0.5 L4.8 4.5 L0.8 8.5" fill="none" stroke="#6F737A" stroke-width="1.1"/></svg>
<svg style="left:469px;top:205px" width="16" height="18" viewBox="0 0 16 18"><path d="M1 1.2 L14.5 9 L1 16.8 Z" fill="#253627" stroke="#5FB865" stroke-width="1.3" stroke-linejoin="round"/></svg>
<svg style="left:489px;top:206px" width="21" height="16" viewBox="0 0 21 16"><path d="M6 3.5 L1.2 8 L6 12.5 M15 3.5 L19.8 8 L15 12.5 M12.5 0.5 L8.5 15.5" fill="none" stroke="#E0925A" stroke-width="1.3"/></svg>
<svg style="left:490px;top:231px" width="22" height="19" viewBox="0 0 22 19"><circle cx="7.5" cy="10.5" r="6.3" fill="none" stroke="#548AF7" stroke-width="1.4"/><circle cx="7.5" cy="10.5" r="3.3" fill="#25324D" stroke="#548AF7" stroke-width="1.4"/><path d="M15 10 V1.8 M12.5 4.3 L15 1.5 L17.5 4.3" fill="none" stroke="#E55765" stroke-width="1.4"/></svg>
<svg style="left:538px;top:395px" width="12" height="17" viewBox="0 0 12 17"><path d="M6 0.5 A5.2 5.2 0 0 1 11.2 5.7 Q11.2 8.2 9 10 V11.5 H3 V10 Q0.8 8.2 0.8 5.7 A5.2 5.2 0 0 1 6 0.5 Z" fill="#F2C55C"/><path d="M3.3 13.2 H8.7 M3.8 15.3 H8.2" stroke="#DFE1E5" stroke-width="1.2"/></svg>
<svg style="left:1814px;top:72px" width="14" height="13" viewBox="0 0 14 13"><path d="M7 0.5 Q7.8 0.5 8.3 1.3 L13.2 10.5 Q13.8 12.3 12 12.5 H2 Q0.2 12.3 0.8 10.5 L5.7 1.3 Q6.2 0.5 7 0.5 Z" fill="#A58A4F"/><path d="M7 3.5 V8" stroke="#1E1F22" stroke-width="1.4"/><circle cx="7" cy="10.2" r="0.8" fill="#1E1F22"/></svg>
<div class="t" style="left:1830px;top:72px;color:#A1A3AB">1</div>
<svg style="left:1846px;top:76px" width="10" height="6" viewBox="0 0 10 6"><path d="M1 5.2 L5 1.2 L9 5.2" fill="none" stroke="#CED0D6" stroke-width="1.1"/></svg>
<svg style="left:1867px;top:76px" width="10" height="6" viewBox="0 0 10 6"><path d="M1 0.8 L5 4.8 L9 0.8" fill="none" stroke="#CED0D6" stroke-width="1.1"/></svg>
<!-- tabs -->
<svg style="left:430px;top:42px" width="17" height="17" viewBox="0 0 17 17"><circle cx="8" cy="8" r="6.6" fill="#25324D"/><path d="M14.6 8 A6.6 6.6 0 1 0 8 14.6" fill="none" stroke="#548AF7" stroke-width="1.3"/><path d="M10.9 6.35 A3.3 3.3 0 1 0 8 11.3" fill="none" stroke="#548AF7" stroke-width="1.3"/><path d="M9.6 9.6 H15.6 L12.8 12.6 L15.6 15.6 H9.6 Z" fill="#2E2A38" stroke="#B189F5" stroke-width="1.2"/></svg>
<div class="t" style="left:451px;top:45px;letter-spacing:0px">MainActivity.kt</div>
<svg style="left:531px;top:46px" width="8" height="8" viewBox="0 0 8 8"><path d="M0.5 0.5 L7.5 7.5 M7.5 0.5 L0.5 7.5" stroke="#8C8F94" stroke-width="1.1"/></svg>
<svg style="left:549px;top:42px" width="18" height="17" viewBox="0 0 18 17"><path d="M1.5 11.5 Q0.8 7.5 3.3 5.2 Q6 3.2 9.3 4 Q11 4.5 12 3.3 Q12 1.5 13.8 1.2 Q15.8 1.5 15.3 3.8 Q14.5 6.5 12 7.6 M1.5 11.5 Q2.5 12.3 3.5 11.6 Q4.8 10.8 6 11.6 Q7.2 12.3 8 11.8 M4.5 8.5 Q6 6.5 8 7.7" fill="none" stroke="#CED0D6" stroke-width="1.05" stroke-linecap="round"/><path d="M10.6 9.6 H16.6 L13.8 12.6 L16.6 15.6 H10.6 Z" fill="#2E2A38" stroke="#B189F5" stroke-width="1.2"/></svg>
<div class="t" style="left:571px;top:45px;letter-spacing:-0.05px;color:#CED0D6">build.gradle.kts (:app)</div>
<svg style="left:708px;top:42px" width="17" height="17" viewBox="0 0 17 17"><circle cx="8" cy="8" r="6.6" fill="#25324D"/><path d="M14.6 8 A6.6 6.6 0 1 0 8 14.6" fill="none" stroke="#548AF7" stroke-width="1.3"/><path d="M10.9 6.35 A3.3 3.3 0 1 0 8 11.3" fill="none" stroke="#548AF7" stroke-width="1.3"/><path d="M9.6 9.6 H15.6 L12.8 12.6 L15.6 15.6 H9.6 Z" fill="#2E2A38" stroke="#B189F5" stroke-width="1.2"/></svg>
<div class="t" style="left:729px;top:45px;letter-spacing:-0.35px;color:#CED0D6">Screen.kt</div>
<svg style="left:801px;top:44px" width="13" height="13" viewBox="0 0 13 13"><path d="M0.6 0.6 H11.8 L6.2 6.5 L11.8 12.4 H0.6 Z" fill="#2E2A38" stroke="#B189F5" stroke-width="1.2"/></svg>
<div class="t" style="left:821px;top:45px;letter-spacing:-0.1px;color:#CED0D6">MainComposition.kt</div>
<svg style="left:952px;top:44px" width="13" height="13" viewBox="0 0 13 13"><path d="M0.6 0.6 H11.8 L6.2 6.5 L11.8 12.4 H0.6 Z" fill="#2E2A38" stroke="#B189F5" stroke-width="1.2"/></svg>
<div class="t" style="left:971px;top:45px;letter-spacing:0.15px;color:#CED0D6">Tapping.kt</div>
<svg style="left:1052px;top:44px" width="13" height="13" viewBox="0 0 13 13"><rect x="0.6" y="0.6" width="11.8" height="11.8" rx="2" fill="#25324D" stroke="#548AF7" stroke-width="1.2"/><path d="M3.5 3.5 H9.5 M6.5 3.5 V10" stroke="#548AF7" stroke-width="1.6"/></svg>
<div class="t" style="left:1072px;top:45px;letter-spacing:-0.07px;color:#CED0D6">libs.versions.toml</div>
<div class="a" style="left:1763px;top:39px;width:24px;height:22px;border-radius:4px;background:#43454A"></div>
<svg style="left:1769px;top:44px" width="12" height="12" viewBox="0 0 12 12"><path d="M0.5 1.5 H10.5 M0.5 4.5 H10.5 M0.5 7.5 H10.5 M0.5 10.5 H10.5" stroke="#DFE1E5" stroke-width="1.1"/></svg>
<svg style="left:1795px;top:43px" width="16" height="14" viewBox="0 0 16 14"><path d="M0.5 1.5 H5.5 M0.5 4.5 H5.5 M0.5 7.5 H5.5 M0.5 10.5 H5.5" stroke="#CED0D6" stroke-width="1"/><rect x="7.5" y="0.5" width="7" height="11.5" rx="1.5" fill="none" stroke="#CED0D6" stroke-width="1.1"/></svg>
<svg style="left:1824px;top:43px" width="14" height="14" viewBox="0 0 14 14"><rect x="0.8" y="0.8" width="12" height="12" rx="1.5" fill="none" stroke="#CED0D6" stroke-width="1.1"/><circle cx="9" cy="4.5" r="1.4" fill="none" stroke="#CED0D6"/><path d="M1 6 L8.5 13" stroke="#CED0D6" stroke-width="1.1"/></svg>
<div class="a" style="left:1848px;top:40px;width:1px;height:20px;background:#393B40"></div>
<div class="a" style="left:1864px;top:44px;width:3px;height:3px;background:#CED0D6;border-radius:1px"></div>
<div class="a" style="left:1864px;top:49px;width:3px;height:3px;background:#CED0D6;border-radius:1px"></div>
<div class="a" style="left:1864px;top:54px;width:3px;height:3px;background:#CED0D6;border-radius:1px"></div>
<!-- notification -->
<div class="a" style="left:1534px;top:957px;width:340px;height:49px;border-radius:6px;background:#393B40;border:1px solid #43454A"></div>
<svg style="left:1548px;top:973px" width="15" height="15" viewBox="0 0 15 15"><circle cx="7.5" cy="7.5" r="7" fill="#548AF7"/><path d="M7.5 6.5 V11.5" stroke="#FFFFFF" stroke-width="1.6"/><circle cx="7.5" cy="4" r="1" fill="#FFFFFF"/></svg>
<div class="t" style="left:1570px;top:974px;letter-spacing:-0.08px">Install successfully finished in 759 ms.</div>
<!-- status bar -->
<div class="a" style="left:0;top:1016px;width:1884px;height:21px;background:#2B2D30"></div>
<div class="a" style="left:0;top:1016px;width:1884px;height:1px;background:#1E1F22"></div>
<div class="a" style="left:11px;top:1025px;width:8px;height:8px;border:1.2px solid #548AF7;border-radius:2px"></div>
<div class="t" style="left:23px;top:1022px;font-size:11.6px;color:#A1A3AB;letter-spacing:-0.1px">MiAplicacindeGesturas</div>
<svg style="left:149px;top:1024px" width="6" height="10" viewBox="0 0 6 10"><path d="M1 1 L5 5 L1 9" fill="none" stroke="#A1A3AB" stroke-width="1.1"/></svg>
<div class="a" style="left:164px;top:1025px;width:8px;height:8px;border:1.2px solid #548AF7;border-radius:2px"></div>
<div class="t" style="left:176px;top:1022px;font-size:11.6px;color:#A1A3AB;letter-spacing:-0.1px">app</div>
<svg style="left:205px;top:1024px" width="6" height="10" viewBox="0 0 6 10"><path d="M1 1 L5 5 L1 9" fill="none" stroke="#A1A3AB" stroke-width="1.1"/></svg>
<div class="t" style="left:220px;top:1022px;font-size:11.6px;color:#A1A3AB;letter-spacing:-0.1px">src</div>
<svg style="left:243px;top:1024px" width="6" height="10" viewBox="0 0 6 10"><path d="M1 1 L5 5 L1 9" fill="none" stroke="#A1A3AB" stroke-width="1.1"/></svg>
<div class="a" style="left:258px;top:1025px;width:8px;height:8px;border:1.2px solid #548AF7;border-radius:2px"></div>
<div class="t" style="left:270px;top:1022px;font-size:11.6px;color:#A1A3AB;letter-spacing:-0.1px">main</div>
<svg style="left:303px;top:1024px" width="6" height="10" viewBox="0 0 6 10"><path d="M1 1 L5 5 L1 9" fill="none" stroke="#A1A3AB" stroke-width="1.1"/></svg>
<div class="t" style="left:319px;top:1022px;font-size:11.6px;color:#A1A3AB;letter-spacing:-0.1px">java</div>
<svg style="left:348px;top:1024px" width="6" height="10" viewBox="0 0 6 10"><path d="M1 1 L5 5 L1 9" fill="none" stroke="#A1A3AB" stroke-width="1.1"/></svg>
<div class="t" style="left:363px;top:1022px;font-size:11.6px;color:#A1A3AB;letter-spacing:-0.1px">com</div>
<svg style="left:394px;top:1024px" width="6" height="10" viewBox="0 0 6 10"><path d="M1 1 L5 5 L1 9" fill="none" stroke="#A1A3AB" stroke-width="1.1"/></svg>
<div class="t" style="left:408px;top:1022px;font-size:11.6px;color:#A1A3AB;letter-spacing:-0.1px">android</div>
<svg style="left:459px;top:1024px" width="6" height="10" viewBox="0 0 6 10"><path d="M1 1 L5 5 L1 9" fill="none" stroke="#A1A3AB" stroke-width="1.1"/></svg>
<div class="t" style="left:473px;top:1022px;font-size:11.6px;color:#A1A3AB;letter-spacing:-0.1px">miappgestures</div>
<svg style="left:559px;top:1024px" width="6" height="10" viewBox="0 0 6 10"><path d="M1 1 L5 5 L1 9" fill="none" stroke="#A1A3AB" stroke-width="1.1"/></svg>
<svg style="left:573px;top:1019px" width="17" height="17" viewBox="0 0 17 17"><circle cx="8" cy="8" r="6.6" fill="#25324D"/><path d="M14.6 8 A6.6 6.6 0 1 0 8 14.6" fill="none" stroke="#548AF7" stroke-width="1.3"/><path d="M10.9 6.35 A3.3 3.3 0 1 0 8 11.3" fill="none" stroke="#548AF7" stroke-width="1.3"/><path d="M9.6 9.6 H15.6 L12.8 12.6 L15.6 15.6 H9.6 Z" fill="#2E2A38" stroke="#B189F5" stroke-width="1.2"/></svg>
<div class="t" style="left:593px;top:1022px;font-size:11.6px;color:#A1A3AB;letter-spacing:-0.1px">MainActivity</div>
<svg style="left:665px;top:1024px" width="6" height="10" viewBox="0 0 6 10"><path d="M1 1 L5 5 L1 9" fill="none" stroke="#A1A3AB" stroke-width="1.1"/></svg>
<svg style="left:679px;top:1021px" width="15" height="15" viewBox="0 0 15 15"><circle cx="7.5" cy="7.5" r="6.5" fill="none" stroke="#E55765" stroke-width="1.2"/><path d="M4.5 10.5 V5.5 Q4.5 4.8 5.5 4.8 Q7.5 4.8 7.5 6 V10.5 M7.5 6 Q7.5 4.8 9.5 4.8 Q10.5 4.8 10.5 6 V10.5" fill="none" stroke="#E55765" stroke-width="1.1"/></svg>
<div class="t" style="left:699px;top:1022px;font-size:11.6px;color:#A1A3AB;letter-spacing:-0.1px">onCreate</div>
<svg style="left:1601px;top:1020px" width="16" height="16" viewBox="0 0 16 16"><circle cx="8" cy="8" r="7" fill="none" stroke="#A1A3AB" stroke-width="1.2"/><path d="M4.5 8 L7 10.5 L11.5 5.5" fill="none" stroke="#A1A3AB" stroke-width="1.3"/></svg>
<div class="t" style="left:1622px;top:1022px;font-size:11.6px;color:#A1A3AB;letter-spacing:-0.25px">28 mins</div>
<div class="t" style="left:1676px;top:1022px;font-size:11.6px;color:#A1A3AB;letter-spacing:-0.3px">22:35</div>
<div class="t" style="left:1719px;top:1022px;font-size:11.6px;color:#A1A3AB;letter-spacing:-0.3px">LF</div>
<div class="t" style="left:1746px;top:1022px;font-size:11.6px;color:#A1A3AB;letter-spacing:-0.3px">UTF-8</div>
<svg style="left:1793px;top:1021px" width="15" height="14" viewBox="0 0 15 14"><path d="M1 1 H14 V10 H6 L3 13 V10 H1 Z" fill="none" stroke="#A1A3AB" stroke-width="1.1" stroke-linejoin="round"/><path d="M7.5 3 V6.5" stroke="#A1A3AB" stroke-width="1.4"/><circle cx="7.5" cy="8.2" r="0.7" fill="#A1A3AB"/></svg>
<div class="t" style="left:1824px;top:1022px;font-size:11.6px;color:#A1A3AB;letter-spacing:-0.35px">4 spaces</div>
</body></html>
